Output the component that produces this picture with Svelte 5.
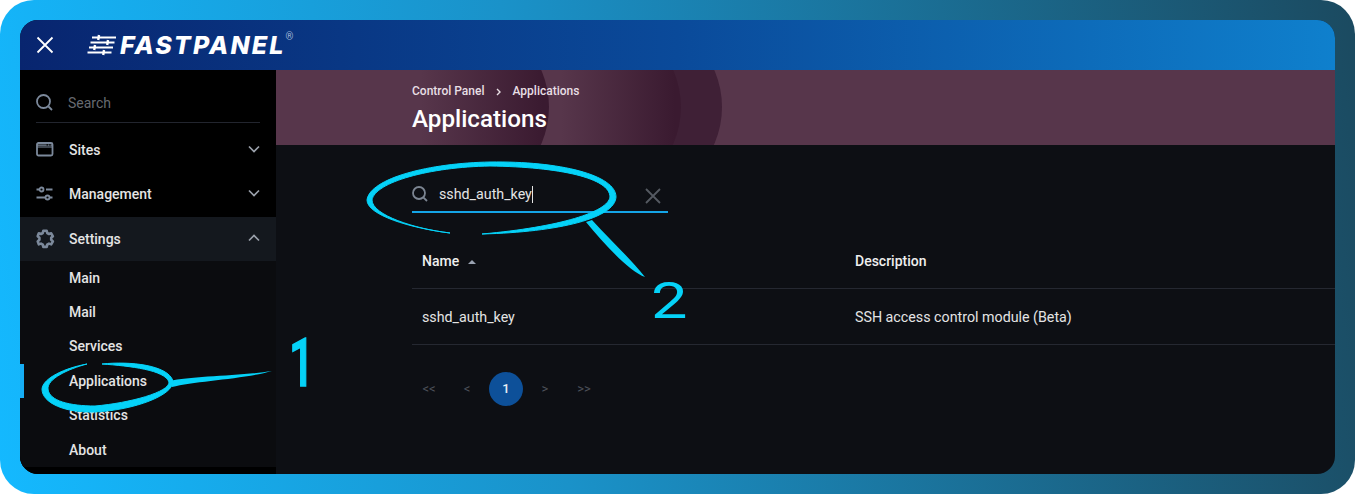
<script>
	const subItems = ['Main', 'Mail', 'Services', 'Applications', 'Statistics', 'About'];
</script>

<div class="frame">
	<div class="window">
		<header class="topbar">
			<svg class="close" width="18" height="18" viewBox="0 0 18 18" aria-hidden="true">
				<path d="M1.500 1.500l15 15M16.500 1.500l-15 15" />
			</svg>
			<div class="logo">
				<svg class="logo-mark" width="30" height="22" viewBox="0 0 30 22" aria-hidden="true">
					<path d="M5 3.500h24M3.500 8.500h24M2 13.500h24M.5 18.500h24" />
					<path class="knob" d="M12 1l-.8 5M21 6l-.8 5M8 11l-.8 5M17 16l-.8 5" />
				</svg>
				<span class="logo-text">FASTPANEL</span>
				<span class="logo-reg">®</span>
			</div>
		</header>

		<div class="body">
			<aside class="sidebar">
				<div class="side-search">
					<svg class="icon" width="20" height="20" viewBox="0 0 20 20" aria-hidden="true">
						<circle cx="7.500" cy="8.500" r="6.500" />
						<path d="M12.500 13.500l3.500 3.500" />
					</svg>
					<span>Search</span>
				</div>

				<div class="nav-row first">
					<svg class="icon" width="20" height="20" viewBox="0 0 20 20" aria-hidden="true">
						<rect x="1" y="3" width="15.500" height="12.500" rx="1.500" />
						<path class="band" d="M1 5.200h15.500M1 7h15.500" />
						<path class="dots" d="M10.500 4.900h1.500M13.200 4.900h1.500" />
					</svg>
					<span class="nav-label">Sites</span>
					<svg class="chevron" width="14" height="14" viewBox="0 0 14 14" aria-hidden="true"><path d="M2 4.500l5 5 5-5" /></svg>
				</div>
				<div class="nav-row">
					<svg class="icon" width="20" height="20" viewBox="0 0 20 20" aria-hidden="true">
						<circle cx="5.500" cy="5.500" r="2" />
						<circle cx="11.500" cy="13.500" r="2" />
						<path d="M10 5.500h6.500M.5 5.500h3M.5 13.500h8.500M14 13.500h2.500" />
					</svg>
					<span class="nav-label">Management</span>
					<svg class="chevron" width="14" height="14" viewBox="0 0 14 14" aria-hidden="true"><path d="M2 4.500l5 5 5-5" /></svg>
				</div>
				<div class="nav-row open">
					<svg class="icon gear" width="20" height="20" viewBox="0 0 20 20" aria-hidden="true">
						<path d="M7.300 1.800h3.400l.5 2.200 1.800 1 2.200-.7 1.700 3-1.700 1.500v2l1.700 1.600-1.700 3-2.200-.8-1.800 1-.5 2.300H7.300l-.5-2.300-1.800-1-2.200.8-1.100-3 1.700-1.600v-2L1.700 7.300l1.100-3 2.200.7 1.800-1z" />
					</svg>
					<span class="nav-label">Settings</span>
					<svg class="chevron" width="14" height="14" viewBox="0 0 14 14" aria-hidden="true"><path d="M2 9.500l5-5 5 5" /></svg>
				</div>

				<ul class="sub-nav">
					{#each subItems as item}
						<li class:active={item === 'Applications'}>{item}</li>
					{/each}
				</ul>
			</aside>

			<main class="content">
				<section class="banner">
					<div class="arc arc-3"></div>
					<div class="arc arc-2"></div>
					<div class="arc arc-1"></div>
					<div class="crumbs">
						<span>Control Panel</span>
						<svg width="8" height="8" viewBox="0 0 8 8" aria-hidden="true"><path d="M2 1l3 3-3 3" /></svg>
						<span>Applications</span>
					</div>
					<h1>Applications</h1>
				</section>

				<section class="panel">
					<div class="filter">
						<svg class="icon" width="18" height="18" viewBox="0 0 18 18" aria-hidden="true">
							<circle cx="7" cy="7" r="6" />
							<path d="M11.300 11.300l3.700 3.700" />
						</svg>
						<span class="filter-value">sshd_auth_key</span>
						<svg class="filter-clear" width="18" height="18" viewBox="0 0 18 18" aria-hidden="true">
							<path d="M2 2l14 14M16 2L2 16" />
						</svg>
					</div>

					<div class="row head">
						<div class="col-name">Name <span class="sort"></span></div>
						<div>Description</div>
					</div>
					<div class="row">
						<div class="col-name">sshd_auth_key</div>
						<div>SSH access control module (Beta)</div>
					</div>

					<div class="pager">
						<span class="first-page">&lt;&lt;</span>
						<span>&lt;</span>
						<span class="current">1</span>
						<span>&gt;</span>
						<span>&gt;&gt;</span>
					</div>
				</section>
			</main>
		</div>
	</div>

	<!-- hand drawn marks on top of the screenshot -->
	<svg class="marks" width="1355" height="494" viewBox="0 0 1355 494" aria-hidden="true">
		<path class="brush" d="M102 364C130 361 168 365 173 381C174 395 135 410 95 412C65 413 42 403 42 389C43 378 65 368 87 364C68 369 47 379 48 389C49 401 70 406 95 406C130 403 170 392 169 382C165 370 130 366 102 364Z" />
		<path d="M170 381C190 376 240 376 272 371C245 379 195 381 172 387Z" />
		<path class="brush" d="M450 233C410 228 367 215 367 200C370 178 430 163 490 162C560 161 616 175 616 197C615 218 560 232 482 234C560 227 608 212 610 197C610 178 560 167 490 166C430 167 375 182 372 200C372 215 415 229 450 233Z" />
		<path d="M586 222L592 220C610 240 630 258 645 277C630 272 605 245 586 222Z" />
		<text class="digit-one" transform="translate(289 386) scale(.68 1)">1</text>
		<text class="digit-two" transform="translate(651 318) scale(1.300 1)">2</text>
	</svg>
</div>

<style>
	:global(body) {
		margin: 0;
		background: #fff;
		overflow: hidden;
	}

	.frame {
		position: relative;
		width: 1355px;
		height: 494px;
		box-sizing: border-box;
		padding: 20px;
		border-radius: 34px;
		background: linear-gradient(82deg, #14b9ff 0%, #1a92c9 40%, #1b4a60 100%);
		font-family: Roboto, "Liberation Sans", sans-serif;
		font-size: 14px;
		color: #e4e4e4;
	}

	.window {
		display: flex;
		flex-direction: column;
		height: 454px;
		border-radius: 18px;
		overflow: hidden;
		background: #0d0f14;
	}

	.topbar {
		display: flex;
		align-items: center;
		height: 50px;
		flex: none;
		padding-left: 16px;
		background: linear-gradient(90deg, #08256f 0%, #0a4a9a 50%, #0f80cd 100%);
	}

	.close path {
		fill: none;
		stroke: #fff;
		stroke-width: 1.800;
	}

	.logo {
		display: flex;
		align-items: center;
		margin-left: 33px;
		color: #fff;
	}

	.logo-mark path {
		fill: none;
		stroke: #fff;
		stroke-width: 1.800;
	}

	.logo-mark .knob {
		stroke-width: 2.400;
	}

	.logo-text {
		margin-left: 3px;
		font-family: Inter, Roboto, sans-serif;
		font-size: 25px;
		font-weight: 800;
		font-style: italic;
		letter-spacing: 2.100px;
		line-height: 28px;
	}

	.logo-reg {
		align-self: flex-start;
		font-family: Roboto, sans-serif;
		font-size: 10px;
		line-height: 12px;
		color: #9fb4d6;
	}

	.body {
		display: flex;
		flex: 1;
		min-height: 0;
	}

	.sidebar {
		width: 256px;
		flex: none;
		display: flex;
		flex-direction: column;
		background: #000;
		font-weight: 500;
	}

	.icon {
		flex: none;
	}

	.icon circle,
	.icon path,
	.icon rect {
		fill: none;
		stroke: #7c899b;
		stroke-width: 1.800;
	}

	.icon .band {
		stroke-width: 1.200;
	}

	.icon .dots {
		stroke: #000;
		stroke-width: 1.200;
	}

	.icon.gear path {
		stroke-width: 2.600;
		stroke-linejoin: round;
	}

	.side-search {
		display: flex;
		align-items: center;
		gap: 12px;
		height: 38px;
		margin: 14px 16px 0;
		border-bottom: 1px solid #22252e;
		font-weight: 400;
		color: #676a70;
	}

	.nav-row {
		display: flex;
		align-items: center;
		height: 44px;
		padding: 0 15px 0 16px;
	}

	.nav-row.first {
		margin-top: 5px;
	}

	.nav-row.open {
		margin-top: 1px;
		background: #14181e;
	}

	.nav-label {
		flex: 1;
		margin-left: 13px;
	}

	.chevron {
		margin-bottom: 2px;
	}

	.chevron path {
		fill: none;
		stroke: #9aa0aa;
		stroke-width: 1.700;
	}

	.sub-nav {
		flex: 1;
		margin: 0 0 7px;
		padding: 0;
		list-style: none;
		background: #0b0c0f;
	}

	.sub-nav li {
		position: relative;
		height: 34.400px;
		line-height: 34.400px;
		padding-left: 49px;
	}

	.sub-nav li.active::before {
		content: '';
		position: absolute;
		left: 0;
		top: 0;
		bottom: 0;
		width: 4px;
		background: #16aef5;
	}

	.content {
		flex: 1;
		min-width: 0;
		display: flex;
		flex-direction: column;
	}

	.banner {
		position: relative;
		height: 75px;
		flex: none;
		box-sizing: border-box;
		padding: 14px 0 0 136px;
		overflow: hidden;
		background: #57364b;
		color: #fff;
	}

	.arc {
		position: absolute;
		top: -55px;
		width: 184px;
		height: 184px;
		border-radius: 50%;
	}

	.arc-1 {
		left: 89px;
		background: linear-gradient(90deg, #57364b 30%, #3a1a30 97%);
	}

	.arc-2 {
		left: 221px;
		background: linear-gradient(90deg, #57364b 35%, #3a1a30 97%);
	}

	.arc-3 {
		left: 262px;
		background: #3f2036;
	}

	.crumbs,
	h1 {
		position: relative;
	}

	.crumbs {
		display: flex;
		align-items: center;
		gap: 10px;
		font-size: 12px;
		font-weight: 500;
		line-height: 15px;
		color: #e8dfe4;
	}

	.crumbs path {
		fill: none;
		stroke: #e8dfe4;
		stroke-width: 1.400;
	}

	h1 {
		margin: 5px 0 0;
		font-size: 24.200px;
		font-weight: 500;
		line-height: 30px;
	}

	.panel {
		flex: 1;
		padding: 36px 0 0 136px;
	}

	.filter {
		display: flex;
		align-items: center;
		width: 256px;
		height: 28px;
		padding-bottom: 2px;
		border-bottom: 2px solid #14a4e6;
	}

	.filter .icon circle,
	.filter .icon path {
		stroke: #7c8592;
	}

	.filter-value {
		flex: 1;
		margin-left: 9px;
		padding-bottom: 2px;
		font-size: 14.250px;
	}

	.filter-value::after {
		content: '';
		display: inline-block;
		width: 1px;
		height: 17px;
		vertical-align: -4px;
		background: #e4e4e4;
	}

	.filter-clear {
		margin: 2px 6px 0 0;
	}

	.filter-clear path {
		fill: none;
		stroke: #555a62;
		stroke-width: 1.800;
	}

	.row {
		display: flex;
		align-items: center;
		height: 55px;
		font-size: 14.250px;
		border-bottom: 1px solid #252831;
	}

	.row.head {
		margin-top: 20px;
		font-size: 14px;
		font-weight: 500;
		color: #eee;
	}

	.col-name {
		width: 433px;
		padding-left: 10px;
		flex: none;
	}

	.sort {
		display: inline-block;
		margin-left: 5px;
		vertical-align: 2px;
		border-left: 4px solid transparent;
		border-right: 4px solid transparent;
		border-bottom: 4px solid #9aa3b2;
	}

	.pager {
		display: flex;
		align-items: center;
		gap: 5px;
		margin-top: 27px;
		font-size: 13px;
		color: #4e525b;
	}

	.pager span {
		width: 34px;
		height: 34px;
		line-height: 34px;
		text-align: center;
	}

	.pager .first-page {
		margin-right: -1px;
	}

	.pager .current {
		border-radius: 50%;
		background: #0d5099;
		font-weight: 500;
		color: #e8eef6;
	}

	.marks {
		position: absolute;
		left: 0;
		top: 0;
	}

	.marks path,
	.marks text {
		fill: #05d2f8;
	}

	.marks .brush {
		stroke: #05d2f8;
		stroke-width: 1px;
	}

	.digit-one {
		font-size: 66px;
		font-weight: 500;
		stroke: #05d2f8;
		stroke-width: 1.500px;
	}

	.digit-two {
		font-size: 50px;
		font-weight: 400;
	}
</style>
